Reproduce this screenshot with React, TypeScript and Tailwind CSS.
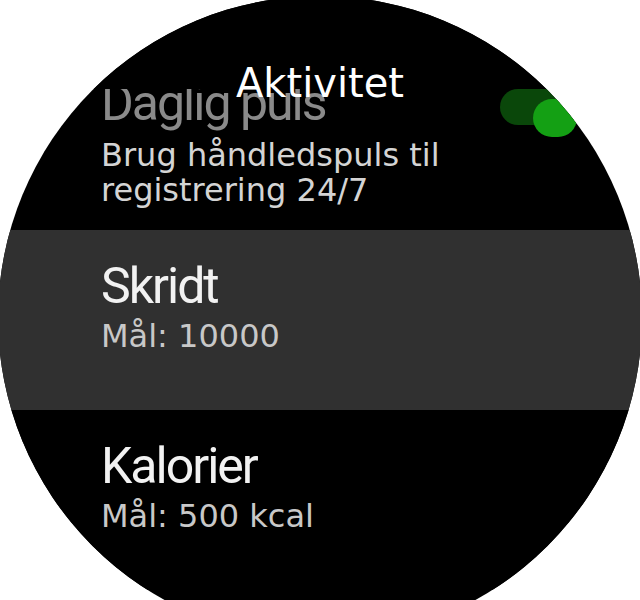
import React from "react";

const titleFont = { fontFamily: "Roboto, 'Noto Sans', sans-serif" };
const bodyFont = { fontFamily: "'DejaVu Sans', Verdana, sans-serif" };

type Item = {
  title: string;
  sub: string;
  selected?: boolean;
};

const items: Item[] = [
  { title: "Skridt", sub: "Mål: 10000", selected: true },
  { title: "Kalorier", sub: "Mål: 500 kcal" },
];

function Toggle() {
  return (
    <div className="relative mt-[11px] h-[36px] w-[80px] shrink-0 rounded-full bg-[#0a470a]">
      <div className="absolute left-[33px] top-[10px] h-[38px] w-[44px] rounded-full bg-[#14a014]" />
    </div>
  );
}

export default function App() {
  return (
    <div className="h-[600px] w-[640px] overflow-hidden bg-white">
      <div className="relative -ml-[2px] -mt-[4px] h-[644px] w-[644px] overflow-hidden rounded-full bg-black">
        <div className="flex flex-col pt-[51px]">
          {/* scrolled-off row, partly under the header */}
          <div className="flex flex-col pb-[22px] pl-[103px] pt-[31px]">
            <div className="flex items-start justify-between pr-[62px]">
              <span
                className="text-[50px] leading-[50px] tracking-[-2px] text-[#8a8a8a]"
                style={titleFont}
              >
                Daglig puls
              </span>
              <Toggle />
            </div>
            <p
              className="mt-[10px] w-[360px] text-[32px] leading-[35px] text-[#d4d4d4]"
              style={bodyFont}
            >
              Brug håndledspuls til registrering 24/7
            </p>
          </div>

          {items.map((it) => (
            <div
              key={it.title}
              className={`flex h-[180px] flex-col pl-[103px] pt-[31px] ${
                it.selected ? "bg-[#303030]" : "bg-black"
              }`}
            >
              <span
                className="text-[50px] leading-[50px] tracking-[-2px] text-[#f2f2f2]"
                style={titleFont}
              >
                {it.title}
              </span>
              <span
                className="mt-[8px] text-[32px] leading-[35px] text-[#c8c8c8]"
                style={bodyFont}
              >
                {it.sub}
              </span>
            </div>
          ))}
        </div>

        {/* fixed header */}
        <div className="absolute inset-x-0 top-0 h-[93px] bg-black">
          <div
            className="pt-[67px] text-center text-[40px] leading-[40px] text-white"
            style={bodyFont}
          >
            Aktivitet
          </div>
        </div>
      </div>
    </div>
  );
}
